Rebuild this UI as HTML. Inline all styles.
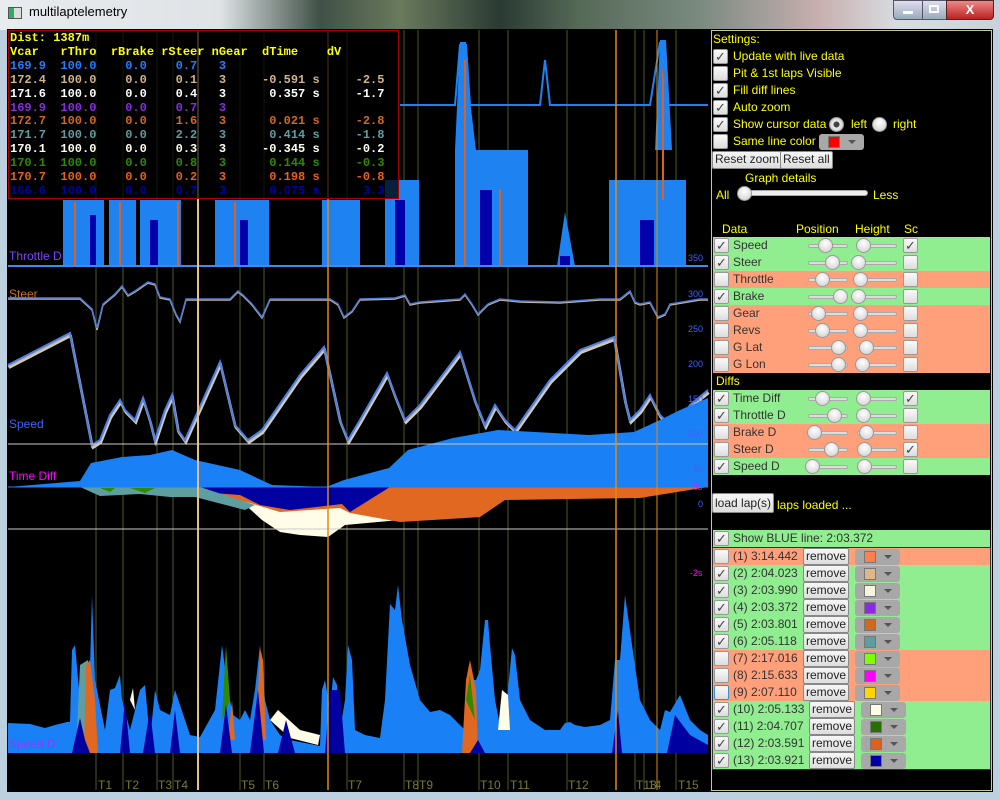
<!DOCTYPE html>
<html><head><meta charset="utf-8"><style>
*{margin:0;padding:0;box-sizing:border-box}
body{width:1000px;height:800px;overflow:hidden;background:#bcd0e0;font-family:"Liberation Sans",sans-serif;position:relative}
.tb{position:absolute;left:0;top:0;width:1000px;height:30px;background:linear-gradient(90deg,#e8ecef 0,#dfe3e6 22%,#405046 32%,#6a7a5c 40%,#2a3a34 50%,#566a58 58%,#7a8a80 70%,#c8b0b0 82%,#d8dde2 90%,#c8d2dc 100%)}
.abs{position:absolute}
.pre{font-family:"Liberation Mono",monospace;font-weight:bold;font-size:12px;line-height:13.9px;white-space:pre}
.r{position:absolute;left:713px;width:277px;height:17px;font-size:12px;color:#333;line-height:17px}
.g{background:#90ee90}.s{background:#ffa07a}
.cb{position:absolute;left:1px;top:1px;width:15px;height:15px;border:1px solid #999;background:linear-gradient(#fafafa,#ddd);border-radius:2px;font-size:13px;line-height:13px;text-align:center;color:#444}
.t{position:absolute;left:20px;top:0}
.sl{position:absolute;top:7px;height:4px;background:#ddd;border:1px solid #aaa;border-radius:2px}
.th{position:absolute;top:1px;width:15px;height:15px;border-radius:50%;background:radial-gradient(circle at 50% 35%,#fff,#ccc);border:1px solid #999}
.bt{position:absolute;height:17px;background:linear-gradient(#f6f6f6,#ddd);border:1px solid #888;border-radius:2px;font-size:12px;color:#222;line-height:15px;padding:0 2px}
.cp{position:absolute;top:1px;width:45px;height:16px;background:#a8a8a8;border-radius:3px}
.cp i{position:absolute;left:9px;top:2px;width:12px;height:12px;border:1px solid #777}
.cp b{position:absolute;left:29px;top:6px;border:4px solid transparent;border-top:4px solid #555}
.y{color:#ffff00;font-size:12px;position:absolute}
.ycb{position:absolute;left:713px;width:15px;height:15px;border:1px solid #999;background:linear-gradient(#fafafa,#ddd);border-radius:2px;font-size:13px;line-height:13px;text-align:center;color:#444}
.ax{position:absolute;font-size:9px;color:#4060ff;font-family:"Liberation Sans",sans-serif}
</style></head><body>
<div class="tb"></div>
<div class="abs" style="left:8px;top:7px;width:14px;height:12px;background:linear-gradient(90deg,#3a6 0,#3a6 40%,#ddd 40%);border:1px solid #555"></div>
<div class="abs" style="left:29px;top:4px;font-size:13px;color:#000">multilaptelemetry</div>
<div class="abs" style="left:893px;top:0;width:30px;height:20px;background:linear-gradient(#dde,#9ab);border:1px solid #556;border-radius:0 0 0 4px"></div>
<div class="abs" style="left:903px;top:11px;width:10px;height:3px;background:#fff"></div>
<div class="abs" style="left:922px;top:0;width:25px;height:20px;background:linear-gradient(#dde,#9ab);border:1px solid #556"></div>
<div class="abs" style="left:929px;top:5px;width:10px;height:8px;border:2px solid #fff"></div>
<div class="abs" style="left:946px;top:0;width:48px;height:20px;background:linear-gradient(#e88,#b22);border:1px solid #522;border-radius:0 0 4px 0;color:#fff;font-weight:bold;font-size:13px;text-align:center;line-height:18px">X</div>

<div class="abs" style="left:7px;top:29px;width:986px;height:763px;background:#000"></div>

<svg class="abs" style="left:0;top:0" width="710" height="800" viewBox="0 0 710 800">
<g stroke="#4a5a2a" stroke-width="1">
<line x1="96" y1="30" x2="96" y2="790"/><line x1="123" y1="30" x2="123" y2="790"/><line x1="157" y1="30" x2="157" y2="790"/><line x1="173" y1="30" x2="173" y2="790"/><line x1="240" y1="30" x2="240" y2="790"/><line x1="264" y1="30" x2="264" y2="790"/><line x1="347" y1="30" x2="347" y2="790"/><line x1="404" y1="30" x2="404" y2="790"/><line x1="418" y1="30" x2="418" y2="790"/><line x1="479" y1="30" x2="479" y2="790"/><line x1="508" y1="30" x2="508" y2="790"/><line x1="567" y1="30" x2="567" y2="790"/><line x1="635" y1="30" x2="635" y2="790"/><line x1="644" y1="30" x2="644" y2="790"/><line x1="676" y1="30" x2="676" y2="790"/>
</g>
<g fill="#1e82f0">
<rect x="63" y="200" width="41" height="66"/><rect x="109" y="200" width="27" height="66"/><rect x="140" y="200" width="41" height="66"/><rect x="215" y="200" width="54" height="66"/><rect x="322" y="200" width="38" height="66"/><rect x="385" y="180" width="34" height="86"/><rect x="455" y="150" width="73" height="116"/><polygon points="557,266 565,212 575,266"/><rect x="609" y="180" width="77" height="86"/>
<polygon points="455,150 460,42 466,42 470,100 476,150"/><polygon points="655,150 660,40 666,40 672,150"/>
</g>
<g fill="#0000aa"><rect x="90" y="215" width="6" height="51"/><rect x="150" y="220" width="8" height="46"/><rect x="240" y="220" width="8" height="46"/><rect x="395" y="200" width="10" height="66"/><rect x="480" y="190" width="12" height="76"/><rect x="560" y="256" width="10" height="10"/><rect x="640" y="220" width="14" height="46"/></g>
<g stroke="#e06020" stroke-width="2"><line x1="75" y1="202" x2="75" y2="266"/><line x1="120" y1="202" x2="120" y2="266"/><line x1="178" y1="202" x2="178" y2="266"/><line x1="235" y1="202" x2="235" y2="266"/><line x1="465" y1="60" x2="465" y2="266"/><line x1="500" y1="190" x2="500" y2="266"/><line x1="663" y1="60" x2="663" y2="200"/></g>
<polyline points="400,105 455,105 460,45 466,45 470,105 540,105 545,60 550,105 650,105 660,42 668,105 708,105" fill="none" stroke="#1e82f0" stroke-width="2"/>
<line x1="8" y1="266" x2="708" y2="266" stroke="#3a8cf0" stroke-width="2"/>
<g fill="none" stroke-width="1.5">
<polyline stroke="#d2b48c" points="8,299 80,299 92,310 97,330 103,305 115,295 122,287 128,296 135,292 148,283 155,285 160,298 170,300 176,315 180,322 186,300 230,300 238,292 243,296 252,305 262,318 270,300 330,300 338,305 344,318 352,312 360,300 395,299 405,296 410,305 420,303 460,300 465,295 472,305 478,315 488,305 500,300 520,302 560,303 600,300 620,300 630,292 635,303 640,305 650,303 658,318 665,315 670,305 700,300 708,300"/>
<polyline stroke="#4a7ae0" points="8,298 80,298 92,309 97,328 103,304 115,294 122,286 128,295 135,291 148,282 155,284 160,297 170,299 176,314 180,321 186,299 230,299 238,291 243,295 252,304 262,317 270,299 330,299 338,304 344,317 352,311 360,299 395,298 405,295 410,304 420,302 460,299 465,294 472,304 478,314 488,304 500,299 520,301 560,302 600,299 620,299 630,291 635,302 640,304 650,302 658,317 665,314 670,304 700,299 708,299"/>
</g>
<g fill="none" stroke-width="2">
<polyline stroke="#ccc" transform="translate(1,3)" points="8,365 70,333 92,445 100,440 110,415 120,400 125,410 135,420 143,398 150,420 155,440 165,410 172,395 178,430 185,440 220,362 235,425 248,440 262,430 300,375 324,347 340,420 348,440 360,420 387,373 395,395 405,420 420,405 460,352 475,400 485,425 495,405 505,420 515,430 550,380 580,350 614,337 625,400 630,420 640,410 650,395 660,415 675,430 690,405 708,390"/>
<polyline stroke="#d2b48c" transform="translate(0,1.5)" points="8,365 70,333 92,445 100,440 110,415 120,400 125,410 135,420 143,398 150,420 155,440 165,410 172,395 178,430 185,440 220,362 235,425 248,440 262,430 300,375 324,347 340,420 348,440 360,420 387,373 395,395 405,420 420,405 460,352 475,400 485,425 495,405 505,420 515,430 550,380 580,350 614,337 625,400 630,420 640,410 650,395 660,415 675,430 690,405 708,390"/>
<polyline stroke="#4a80e8" points="8,365 70,333 92,445 100,440 110,415 120,400 125,410 135,420 143,398 150,420 155,440 165,410 172,395 178,430 185,440 220,362 235,425 248,440 262,430 300,375 324,347 340,420 348,440 360,420 387,373 395,395 405,420 420,405 460,352 475,400 485,425 495,405 505,420 515,430 550,380 580,350 614,337 625,400 630,420 640,410 650,395 660,415 675,430 690,405 708,390"/>
</g>
<polygon fill="#1a80f5" points="8,487 80,481 91,463 122,457 150,455 172,450 195,460 240,470 272,485 326,487 344,480 389,468 408,450 453,438 498,430 589,435 634,432 660,420 680,410 708,398 708,487"/>
<line x1="8" y1="444" x2="708" y2="444" stroke="#ccc" stroke-width="1"/>
<polygon fill="#fffde8" points="80,487 200,490 240,500 262,520 280,532 300,535 328,537 345,525 400,520 460,512 500,500 512,487"/>
<polygon fill="#e06820" points="190,487 708,487 640,498 505,500 480,517 465,518 400,522 350,513 340,508 280,512 250,503 230,498 200,492"/>
<polygon fill="#0000a0" points="130,487 390,487 350,512 342,504 290,510 260,505 240,495"/>
<polygon fill="#5f9ea0" points="80,487 200,487 255,505 245,510 195,497 170,497 140,494 100,496"/>
<polygon fill="#2e8b00" points="100,488 115,488 110,492"/><polygon fill="#2e8b00" points="130,488 155,488 145,493"/>
<line x1="8" y1="487" x2="708" y2="487" stroke="#1a80f5" stroke-width="1"/>
<line x1="8" y1="529" x2="708" y2="529" stroke="#ccc" stroke-width="1"/>
<polygon fill="#1a80f5" points="8,753 8,723 30,724 45,728 55,725 67,722 70,722 72,650 75,645 80,700 85,680 90,668 92,595 95,680 100,705 105,730 110,690 115,688 120,675 122,700 130,730 140,690 145,685 150,740 155,690 160,710 170,715 175,690 180,705 190,735 200,737 205,728 215,710 222,645 228,690 233,715 240,720 245,710 250,720 255,690 260,645 265,700 270,720 280,735 290,740 300,742 320,746 322,690 325,680 330,710 333,677 337,685 340,730 345,700 348,645 352,660 355,730 365,735 380,738 385,700 390,604 395,610 398,585 402,620 410,665 420,700 430,712 440,710 450,715 460,725 465,730 470,680 476,680 480,670 485,620 488,620 490,645 495,700 500,725 505,720 512,648 515,655 520,700 530,720 545,730 560,730 565,723 570,722 575,725 585,727 600,725 610,720 615,660 620,660 625,595 632,645 640,700 650,720 660,730 665,710 670,712 680,695 690,720 700,730 708,735 708,753"/>
<polygon fill="#5f9ea0" points="76,753 80,665 88,660 92,720 90,753"/>
<polygon fill="#e06820" points="84,753 86,665 90,660 95,700 98,753"/><polygon fill="#e06820" points="256,740 260,648 263,660 266,740"/><polygon fill="#e06820" points="462,753 466,680 470,660 476,690 478,753"/><polygon fill="#e06820" points="228,740 232,700 235,740"/>
<polygon fill="#2e8b00" points="222,720 226,645 230,700"/><polygon fill="#2e8b00" points="466,700 470,675 475,720"/>
<polygon fill="#fffde8" points="270,720 290,738 318,745 320,735 300,730 278,710"/><polygon fill="#fffde8" points="498,730 502,690 508,695 510,730"/><polygon fill="#fffde8" points="130,700 133,688 135,710"/>
<g fill="#0000a0">
<polygon points="72,753 80,718 85,740 90,753"/><polygon points="120,753 125,700 130,753"/><polygon points="143,753 150,710 155,753"/><polygon points="170,753 175,710 180,753"/>
<polygon points="220,753 226,705 232,753"/><polygon points="250,753 258,690 264,753"/><polygon points="278,753 286,720 295,753"/>
<polygon points="325,753 330,690 340,690 345,753"/><polygon points="470,753 478,740 485,753"/><polygon points="612,753 618,710 622,753"/><polygon points="667,753 675,715 690,735 708,745 708,753"/>
</g>
<line x1="198" y1="30" x2="198" y2="790" stroke="#e8c090" stroke-width="2"/>
<line x1="328" y1="30" x2="328" y2="790" stroke="#e08a10" stroke-width="1.5"/>
<line x1="616" y1="30" x2="616" y2="790" stroke="#e08a10" stroke-width="1.5"/>
<line x1="657" y1="30" x2="657" y2="790" stroke="#e08a10" stroke-width="1"/>
</svg>

<div class="ax" style="left:688px;top:253px">350</div><div class="ax" style="left:688px;top:289px">300</div><div class="ax" style="left:688px;top:324px">250</div><div class="ax" style="left:688px;top:359px">200</div><div class="ax" style="left:688px;top:394px">150</div><div class="ax" style="left:688px;top:429px">100</div><div class="ax" style="left:693px;top:464px">50</div><div class="ax" style="left:698px;top:499px">0</div>
<div class="ax" style="left:693px;top:482px;color:#f0f">0s</div><div class="ax" style="left:690px;top:568px;color:#f0f">-2s</div>

<div class="abs" style="left:9px;top:249px;font-size:12px;color:#8040ff">Throttle D</div>
<div class="abs" style="left:9px;top:287px;font-size:12px;color:#c87020">Steer</div>
<div class="abs" style="left:9px;top:417px;font-size:12px;color:#4060ff">Speed</div>
<div class="abs" style="left:9px;top:469px;font-size:12px;color:#ff00ff">Time Diff</div>
<div class="abs" style="left:9px;top:737px;font-size:12px;color:#8040ff">Speed D</div>

<div class="abs" style="left:0;top:778px;width:710px;height:14px;font-size:12px;color:#7a7a30">
<span class="abs" style="left:98px">T1</span><span class="abs" style="left:125px">T2</span><span class="abs" style="left:158px">T3</span><span class="abs" style="left:174px">T4</span><span class="abs" style="left:241px">T5</span><span class="abs" style="left:265px">T6</span><span class="abs" style="left:348px">T7</span><span class="abs" style="left:405px">T8</span><span class="abs" style="left:419px">T9</span><span class="abs" style="left:480px">T10</span><span class="abs" style="left:510px">T11</span><span class="abs" style="left:568px">T12</span><span class="abs" style="left:636px">T13</span><span class="abs" style="left:648px">14</span><span class="abs" style="left:678px">T15</span></div>

<div class="abs pre" style="left:8px;top:30px;width:391px;height:169px;border:1px solid #a00;background:rgba(0,0,0,0.75);padding:1px 0 0 1px"><span style="color:#ff0">Dist: 1387m
Vcar   rThro  rBrake rSteer nGear  dTime    dV</span>
<span style="color:#1e7fff">169.9  100.0    0.0    0.7   3</span>
<span style="color:#d2b48c">172.4  100.0    0.0    0.1   3     -0.591 s     -2.5</span>
<span style="color:#fff">171.6  100.0    0.0    0.4   3      0.357 s     -1.7</span>
<span style="color:#8a2be2">169.9  100.0    0.0    0.7   3</span>
<span style="color:#d2691e">172.7  100.0    0.0    1.6   3      0.021 s     -2.8</span>
<span style="color:#5f9ea0">171.7  100.0    0.0    2.2   3      0.414 s     -1.8</span>
<span style="color:#fffff0">170.1  100.0    0.0    0.3   3     -0.345 s     -0.2</span>
<span style="color:#2e8b00">170.1  100.0    0.0    0.8   3      0.144 s     -0.3</span>
<span style="color:#e8601c">170.7  100.0    0.0    0.2   3      0.198 s     -0.8</span>
<span style="color:#0000b0">166.6  100.0    0.0    0.7   3      0.075 s      3.3</span></div>

<div class="abs" style="left:711px;top:30px;width:281px;height:761px;border:1px solid #c8c890"></div>
<div class="y" style="left:713px;top:32px">Settings:</div>
<div class="ycb" style="top:49px">✓</div><div class="y" style="left:733px;top:49px">Update with live data</div>
<div class="ycb" style="top:66px"></div><div class="y" style="left:733px;top:66px">Pit &amp; 1st laps Visible</div>
<div class="ycb" style="top:83px">✓</div><div class="y" style="left:733px;top:83px">Fill diff lines</div>
<div class="ycb" style="top:100px">✓</div><div class="y" style="left:733px;top:100px">Auto zoom</div>
<div class="ycb" style="top:117px">✓</div><div class="y" style="left:733px;top:117px">Show cursor data</div>
<div class="abs" style="left:829px;top:117px;width:15px;height:15px;border-radius:50%;background:radial-gradient(circle,#444 0,#444 30%,#eee 35%,#bbb);border:1px solid #999"></div><div class="y" style="left:851px;top:117px">left</div>
<div class="abs" style="left:872px;top:117px;width:15px;height:15px;border-radius:50%;background:radial-gradient(circle at 50% 35%,#fff,#ccc);border:1px solid #999"></div><div class="y" style="left:893px;top:117px">right</div>
<div class="ycb" style="top:134px"></div><div class="y" style="left:733px;top:134px">Same line color</div>
<div class="cp" style="left:819px;top:134px"><i style="background:#f00"></i><b></b></div>
<div class="bt" style="left:712px;top:151px;height:18px">Reset zoom</div><div class="bt" style="left:780px;top:151px;height:18px">Reset all</div>
<div class="y" style="left:745px;top:171px">Graph details</div>
<div class="y" style="left:716px;top:188px">All</div>
<div class="abs" style="left:738px;top:190px;width:130px;height:6px;background:#eee;border:1px solid #aaa;border-radius:3px"></div>
<div class="abs" style="left:737px;top:186px;width:15px;height:15px;border-radius:50%;background:radial-gradient(circle at 50% 35%,#fff,#ccc);border:1px solid #999"></div>
<div class="y" style="left:873px;top:188px">Less</div>
<div class="y" style="left:722px;top:222px">Data</div><div class="y" style="left:796px;top:222px">Position</div><div class="y" style="left:855px;top:222px">Height</div><div class="y" style="left:904px;top:222px">Sc</div>

<div class="r g" style="top:237px"><div class="cb">✓</div><span class="t">Speed</span><div class="sl" style="left:95px;width:40px"></div><div class="th" style="left:105px"></div><div class="sl" style="left:144px;width:40px"></div><div class="th" style="left:143px"></div><div class="cb" style="left:190px">✓</div></div>
<div class="r g" style="top:254px"><div class="cb">✓</div><span class="t">Steer</span><div class="sl" style="left:95px;width:40px"></div><div class="th" style="left:112px"></div><div class="sl" style="left:144px;width:40px"></div><div class="th" style="left:138px"></div><div class="cb" style="left:190px"></div></div>
<div class="r s" style="top:271px"><div class="cb"></div><span class="t">Throttle</span><div class="sl" style="left:95px;width:40px"></div><div class="th" style="left:102px"></div><div class="sl" style="left:144px;width:40px"></div><div class="th" style="left:140px"></div><div class="cb" style="left:190px"></div></div>
<div class="r g" style="top:288px"><div class="cb">✓</div><span class="t">Brake</span><div class="sl" style="left:95px;width:40px"></div><div class="th" style="left:120px"></div><div class="sl" style="left:144px;width:40px"></div><div class="th" style="left:138px"></div><div class="cb" style="left:190px"></div></div>
<div class="r s" style="top:305px"><div class="cb"></div><span class="t">Gear</span><div class="sl" style="left:95px;width:40px"></div><div class="th" style="left:98px"></div><div class="sl" style="left:144px;width:40px"></div><div class="th" style="left:140px"></div><div class="cb" style="left:190px"></div></div>
<div class="r s" style="top:322px"><div class="cb"></div><span class="t">Revs</span><div class="sl" style="left:95px;width:40px"></div><div class="th" style="left:102px"></div><div class="sl" style="left:144px;width:40px"></div><div class="th" style="left:140px"></div><div class="cb" style="left:190px"></div></div>
<div class="r s" style="top:339px"><div class="cb"></div><span class="t">G Lat</span><div class="sl" style="left:95px;width:40px"></div><div class="th" style="left:118px"></div><div class="sl" style="left:144px;width:40px"></div><div class="th" style="left:146px"></div><div class="cb" style="left:190px"></div></div>
<div class="r s" style="top:356px"><div class="cb"></div><span class="t">G Lon</span><div class="sl" style="left:95px;width:40px"></div><div class="th" style="left:118px"></div><div class="sl" style="left:144px;width:40px"></div><div class="th" style="left:142px"></div><div class="cb" style="left:190px"></div></div>
<div class="y" style="left:716px;top:374px">Diffs</div>
<div class="r g" style="top:390px"><div class="cb">✓</div><span class="t">Time Diff</span><div class="sl" style="left:95px;width:40px"></div><div class="th" style="left:102px"></div><div class="sl" style="left:144px;width:40px"></div><div class="th" style="left:143px"></div><div class="cb" style="left:190px">✓</div></div>
<div class="r g" style="top:407px"><div class="cb">✓</div><span class="t">Throttle D</span><div class="sl" style="left:95px;width:40px"></div><div class="th" style="left:114px"></div><div class="sl" style="left:144px;width:40px"></div><div class="th" style="left:143px"></div><div class="cb" style="left:190px"></div></div>
<div class="r s" style="top:424px"><div class="cb"></div><span class="t">Brake D</span><div class="sl" style="left:95px;width:40px"></div><div class="th" style="left:94px"></div><div class="sl" style="left:144px;width:40px"></div><div class="th" style="left:146px"></div><div class="cb" style="left:190px"></div></div>
<div class="r s" style="top:441px"><div class="cb"></div><span class="t">Steer D</span><div class="sl" style="left:95px;width:40px"></div><div class="th" style="left:111px"></div><div class="sl" style="left:144px;width:40px"></div><div class="th" style="left:144px"></div><div class="cb" style="left:190px">✓</div></div>
<div class="r g" style="top:458px"><div class="cb">✓</div><span class="t">Speed D</span><div class="sl" style="left:95px;width:40px"></div><div class="th" style="left:92px"></div><div class="sl" style="left:144px;width:40px"></div><div class="th" style="left:144px"></div><div class="cb" style="left:190px"></div></div>

<div class="bt" style="left:712px;top:493px;height:20px;line-height:18px">load lap(s)</div>
<div class="y" style="left:777px;top:498px">laps loaded ...</div>

<div class="r g" style="top:530px"><div class="cb">✓</div><span class="t">Show BLUE line: 2:03.372</span></div>
<div class="abs" style="left:712px;top:547px;width:279px;height:223px;border:1px solid #333"></div>
<div class="r s" style="top:548px"><div class="cb"></div><span class="t">(1) 3:14.442</span><div class="bt" style="left:90px;top:0">remove</div><div class="cp" style="left:142px"><i style="background:#ff7f50"></i><b></b></div></div>
<div class="r g" style="top:565px"><div class="cb">✓</div><span class="t">(2) 2:04.023</span><div class="bt" style="left:90px;top:0">remove</div><div class="cp" style="left:142px"><i style="background:#deb887"></i><b></b></div></div>
<div class="r g" style="top:582px"><div class="cb">✓</div><span class="t">(3) 2:03.990</span><div class="bt" style="left:90px;top:0">remove</div><div class="cp" style="left:142px"><i style="background:#f5f5dc"></i><b></b></div></div>
<div class="r g" style="top:599px"><div class="cb">✓</div><span class="t">(4) 2:03.372</span><div class="bt" style="left:90px;top:0">remove</div><div class="cp" style="left:142px"><i style="background:#8a2be2"></i><b></b></div></div>
<div class="r g" style="top:616px"><div class="cb">✓</div><span class="t">(5) 2:03.801</span><div class="bt" style="left:90px;top:0">remove</div><div class="cp" style="left:142px"><i style="background:#d2691e"></i><b></b></div></div>
<div class="r g" style="top:633px"><div class="cb">✓</div><span class="t">(6) 2:05.118</span><div class="bt" style="left:90px;top:0">remove</div><div class="cp" style="left:142px"><i style="background:#5f9ea0"></i><b></b></div></div>
<div class="r s" style="top:650px"><div class="cb"></div><span class="t">(7) 2:17.016</span><div class="bt" style="left:90px;top:0">remove</div><div class="cp" style="left:142px"><i style="background:#7fff00"></i><b></b></div></div>
<div class="r s" style="top:667px"><div class="cb"></div><span class="t">(8) 2:15.633</span><div class="bt" style="left:90px;top:0">remove</div><div class="cp" style="left:142px"><i style="background:#ff00ff"></i><b></b></div></div>
<div class="r s" style="top:684px"><div class="cb" style="border-color:#3a8fd0"></div><span class="t">(9) 2:07.110</span><div class="bt" style="left:90px;top:0">remove</div><div class="cp" style="left:142px"><i style="background:#ffd700"></i><b></b></div></div>
<div class="r g" style="top:701px"><div class="cb">✓</div><span class="t">(10) 2:05.133</span><div class="bt" style="left:96px;top:0">remove</div><div class="cp" style="left:148px"><i style="background:#fffde0"></i><b></b></div></div>
<div class="r g" style="top:718px"><div class="cb">✓</div><span class="t">(11) 2:04.707</span><div class="bt" style="left:96px;top:0">remove</div><div class="cp" style="left:148px"><i style="background:#2a7000"></i><b></b></div></div>
<div class="r g" style="top:735px"><div class="cb">✓</div><span class="t">(12) 2:03.591</span><div class="bt" style="left:96px;top:0">remove</div><div class="cp" style="left:148px"><i style="background:#e06020"></i><b></b></div></div>
<div class="r g" style="top:752px"><div class="cb">✓</div><span class="t">(13) 2:03.921</span><div class="bt" style="left:96px;top:0">remove</div><div class="cp" style="left:148px"><i style="background:#0000aa"></i><b></b></div></div>
</body></html>
